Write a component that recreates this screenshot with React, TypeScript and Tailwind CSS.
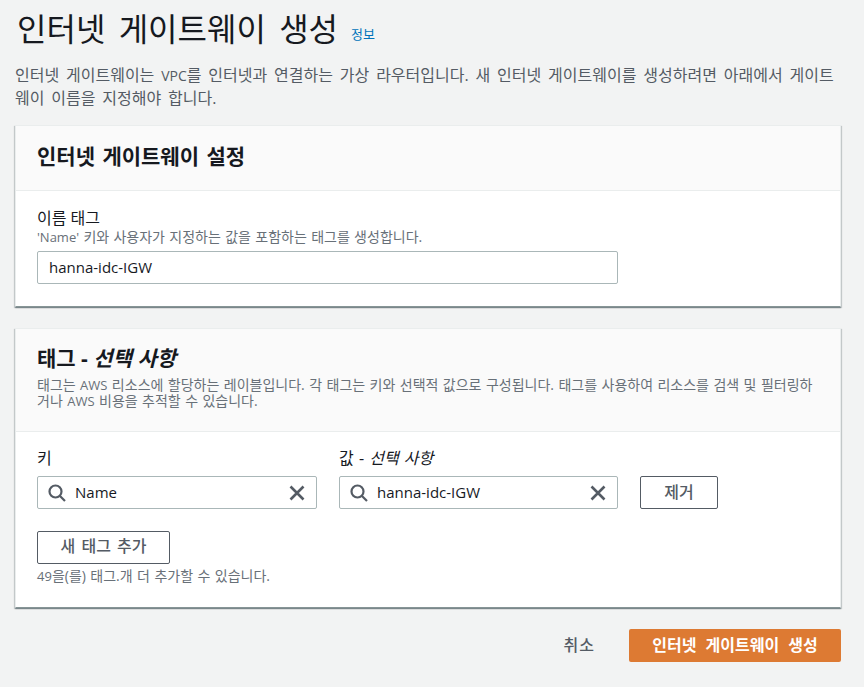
const fontStack = { fontFamily: '"Open Sans", "Noto Sans CJK KR", sans-serif' };

const SearchIcon = () => (
  <svg width="18" height="18" viewBox="0 0 18 18" fill="none" stroke="#545b64" strokeWidth="2.2" className="shrink-0">
    <circle cx="7.5" cy="7.5" r="6" />
    <path d="M12 12l5 5" />
  </svg>
);

const CloseIcon = () => (
  <svg width="16" height="16" viewBox="0 0 16 16" fill="none" stroke="#545b64" strokeWidth="2.6" className="shrink-0">
    <path d="M1.5 1.5l13 13M14.5 1.5l-13 13" />
  </svg>
);

const TagInput = ({ value }: { value: string }) => (
  <div className="flex h-[33px] items-center rounded-[2px] border border-[#aab7b8] bg-white pl-[10px] pr-[11px]">
    <SearchIcon />
    <span className="ml-[9px] flex-1 text-[15px] text-[#16191f]">{value}</span>
    <CloseIcon />
  </div>
);

export default function App() {
  return (
    <div className="h-[687px] w-[864px] overflow-hidden bg-[#f2f3f3] pl-[15px] pr-[23px]" style={fontStack}>
      <div className="flex h-[58px] items-center pl-[2px]">
        <h1 className="text-[32px] leading-[38px] font-normal text-[#16191f] [word-spacing:5px]">인터넷 게이트웨이 생성</h1>
        <a className="ml-[13px] mt-[11px] text-[13px] text-[#0073bb]">정보</a>
      </div>
      <p className="mt-[6px] w-[826px] text-[16px] leading-[22px] text-[#545b64] [word-spacing:2.7px]">
        인터넷 게이트웨이는 <span className="text-[14px]">VPC</span>를 인터넷과 연결하는 가상 라우터입니다. 새 인터넷 게이트웨이를 생성하려면 아래에서 게이트웨이 이름을 지정해야 합니다.
      </p>

      <section className="mt-[16px] h-[182px] border border-[#eaeded] border-b-[#879596] bg-white shadow-[0_1px_1px_0_rgba(0,28,36,0.3),1px_1px_1px_0_rgba(0,28,36,0.15),-1px_1px_1px_0_rgba(0,28,36,0.15)]">
        <div className="flex h-[65px] items-center border-b border-[#eaeded] bg-[#fafafa] pb-[2px] pl-[21px]">
          <h2 className="text-[21px] font-bold text-[#16191f] [word-spacing:2px]">인터넷 게이트웨이 설정</h2>
        </div>
        <div className="pl-[21px] pt-[17px]">
          <div className="text-[16px] leading-[20px] text-[#16191f]">이름 태그</div>
          <div className="text-[14px] leading-[18px] text-[#687078] [word-spacing:0.7px]"><span className="text-[13px]">'Name'</span> 키와 사용자가 지정하는 값을 포함하는 태그를 생성합니다.</div>
          <div className="mt-[5px] flex h-[33px] w-[581px] items-center rounded-[2px] border border-[#aab7b8] bg-white pl-[11px] text-[15px] text-[#16191f]">
            hanna-idc-IGW
          </div>
        </div>
      </section>

      <section className="mt-[21px] h-[280px] border border-[#eaeded] border-b-[#879596] bg-white shadow-[0_1px_1px_0_rgba(0,28,36,0.3),1px_1px_1px_0_rgba(0,28,36,0.15),-1px_1px_1px_0_rgba(0,28,36,0.15)]">
        <div className="h-[103px] border-b border-[#eaeded] bg-[#fafafa] pl-[21px] pr-[21px] pt-[15px]">
          <h2 className="text-[21px] leading-[28px] font-bold text-[#16191f]">
            태그 - <i>선택 사항</i>
          </h2>
          <p className="mt-[5px] text-[14px] leading-[16px] text-[#687078] [word-spacing:0.8px]">
            태그는 <span className="text-[13px]">AWS</span> 리소스에 할당하는 레이블입니다. 각 태그는 키와 선택적 값으로 구성됩니다. 태그를 사용하여 리소스를 검색 및 필터링하거나 <span className="text-[13px]">AWS</span> 비용을 추적할 수 있습니다.
          </p>
        </div>
        <div className="pl-[21px] pt-[16px]">
          <div className="flex">
            <div className="w-[280px]">
              <div className="text-[16px] leading-[20px] text-[#16191f]">키</div>
              <div className="mt-[8px]"><TagInput value="Name" /></div>
            </div>
            <div className="ml-[22px] w-[279px]">
              <div className="text-[16px] leading-[20px] text-[#16191f] [word-spacing:1px]">값 - <i>선택 사항</i></div>
              <div className="mt-[8px]"><TagInput value="hanna-idc-IGW" /></div>
            </div>
            <button className="ml-[22px] mt-[28px] h-[33px] w-[78px] rounded-[2px] border border-[#545b64] bg-white pb-[2px] text-[16px] font-medium text-[#545b64]">제거</button>
          </div>
          <button className="mt-[22px] block h-[33px] w-[133px] rounded-[2px] border border-[#545b64] bg-white pb-[3px] text-[16px] font-medium text-[#545b64] [word-spacing:2px]">새 태그 추가</button>
          <div className="mt-[3px] text-[14px] leading-[18px] text-[#687078] [word-spacing:0.8px]"><span className="text-[13px]">49</span>을(를) 태그.개 더 추가할 수 있습니다.</div>
        </div>
      </section>

      <div className="mt-[21px] flex items-center justify-end">
        <button className="pb-[2px] text-[16px] font-medium text-[#545b64] tracking-[1px]">취소</button>
        <button className="ml-[34px] h-[33px] w-[212px] rounded-[2px] bg-[#dd7a33] pb-[2px] text-[16px] font-bold text-white [word-spacing:5px]">인터넷 게이트웨이 생성</button>
      </div>
    </div>
  );
}
